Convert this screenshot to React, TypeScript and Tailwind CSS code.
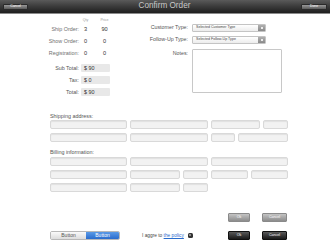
import React from "react";

const field =
  "h-[9px] rounded-[2px] border border-[#d9d9d9] bg-[#f2f2f2] shadow-[inset_0_1px_1px_#e0e0e0]";

function Row({ widths }: { widths: number[] }) {
  return (
    <div className="flex gap-[3px]">
      {widths.map((w, i) => (
        <div key={i} className={field} style={{ width: w }} />
      ))}
    </div>
  );
}

function QtyRow({ label, qty, price }: { label: string; qty: string; price: string }) {
  return (
    <div className="flex h-[12px] items-center">
      <div className="w-[79px] text-right text-[5.4px] text-[#707070]">{label}</div>
      <div className="w-[13px] text-center text-[5.6px] text-[#333]">{qty}</div>
      <div className="w-[25px] text-center text-[5.6px] text-[#333]">{price}</div>
    </div>
  );
}

function TotalRow({ label, value }: { label: string; value: string }) {
  return (
    <div className="flex h-[12px] items-center">
      <div className="w-[79px] text-right text-[5.4px] text-[#555]">{label}</div>
      <div className="ml-[2px] flex h-[8px] w-[29px] items-center rounded-[1px] bg-[#e8e8e8] pl-[3px] text-[5.4px] text-[#333]">
        {value}
      </div>
    </div>
  );
}

function Select({ text }: { text: string }) {
  return (
    <div className="flex h-[8px] w-[74px] items-center rounded-[1px] border border-[#c4c4c4] bg-gradient-to-b from-[#ffffff] to-[#ececec]">
      <div className="flex-1 pl-[3px] text-[3.6px] leading-none text-[#444]">{text}</div>
      <div className="flex h-full w-[7px] items-center justify-center bg-gradient-to-b from-[#b0b0b0] to-[#8a8a8a]">
        <div className="h-[2px] w-[2px] bg-white/80" />
      </div>
    </div>
  );
}

export default function App() {
  return (
    <div className="relative h-[248px] w-[330px] overflow-hidden bg-white font-['Liberation_Sans',Arial,sans-serif]">
      {/* Header */}
      <div className="flex h-[14px] items-center justify-between border-b border-[#8a8a8a] bg-gradient-to-b from-[#5a5a5a] via-[#3a3a3a] to-[#1f1f1f] px-[3px]">
        <div className="flex h-[6px] w-[25px] items-center justify-center rounded-[1px] border border-[#2a2a2a] bg-gradient-to-b from-[#9a9a9a] to-[#5a5a5a] text-[3.4px] leading-none text-white">
          Cancel
        </div>
        <div className="text-[8.2px] leading-none text-[#c8c8c8]">Confirm Order</div>
        <div className="flex h-[6px] w-[26px] items-center justify-center rounded-[1px] border border-[#2a2a2a] bg-gradient-to-b from-[#9a9a9a] to-[#5a5a5a] text-[3.4px] leading-none text-white">
          Done
        </div>
      </div>

      {/* Top section */}
      <div className="flex">
        <div className="w-[140px]">
          <div className="mt-[4px] flex h-[5px] items-center">
            <div className="w-[79px]" />
            <div className="w-[13px] text-center text-[3.6px] leading-none text-[#999]">Qty</div>
            <div className="w-[25px] text-center text-[3.6px] leading-none text-[#999]">Price</div>
          </div>
          <QtyRow label="Ship Order:" qty="3" price="90" />
          <QtyRow label="Show Order:" qty="0" price="0" />
          <QtyRow label="Registration:" qty="0" price="0" />
          <div className="mt-[3px]">
            <TotalRow label="Sub Total:" value="$ 90" />
            <TotalRow label="Tax:" value="$ 0" />
            <TotalRow label="Total:" value="$ 90" />
          </div>
        </div>
        <div className="flex-1 pt-[10px]">
          <div className="flex items-center">
            <div className="w-[48px] text-right text-[5.3px] text-[#555]">Customer Type:</div>
            <div className="ml-[4px]">
              <Select text="Selected Customer Type" />
            </div>
          </div>
          <div className="mt-[4px] flex items-center">
            <div className="w-[48px] text-right text-[5.3px] text-[#555]">Follow-Up Type:</div>
            <div className="ml-[4px]">
              <Select text="Selected Follow-Up Type" />
            </div>
          </div>
          <div className="mt-[5px] flex items-start">
            <div className="w-[48px] pt-[1px] text-right text-[5.3px] leading-[6px] text-[#555]">Notes:</div>
            <div className="ml-[4px] h-[44px] w-[90px] rounded-[1px] border border-[#c8c8c8] bg-white" />
          </div>
        </div>
      </div>

      {/* Addresses */}
      <div className="pl-[50px]">
        <div className="mt-[15px] h-[6px] text-[5.4px] leading-[6px] text-[#555]">Shipping address:</div>
        <div className="mt-[1px] flex flex-col gap-[4px]">
          <Row widths={[77, 78, 49, 25]} />
          <Row widths={[77, 78, 24, 50]} />
        </div>
        <div className="mt-[7px] h-[6px] text-[5.4px] leading-[6px] text-[#555]">Billing information:</div>
        <div className="mt-[2px] flex flex-col gap-[4px]">
          <Row widths={[77, 78, 77]} />
          <Row widths={[77, 50, 25, 37, 37]} />
          <Row widths={[77, 50, 25]} />
        </div>

        {/* Footer */}
        <div className="mt-[21px] flex w-[237px] items-end">
          <div className="flex h-[9px] overflow-hidden rounded-[2px] border border-[#b8b8b8]">
            <div className="flex w-[35px] items-center justify-center bg-gradient-to-b from-[#fafafa] to-[#dcdcdc] text-[5px] text-[#555]">
              Button
            </div>
            <div className="flex w-[33px] items-center justify-center bg-gradient-to-b from-[#5a9ae6] to-[#2a6ccd] text-[5px] text-white">
              Button
            </div>
          </div>
          <div className="mb-[1px] ml-[22px] flex items-center text-[4.8px] text-[#444]">
            <span>I aggre to&nbsp;</span>
            <span className="text-[#2a6ccd] underline">the policy</span>
            <span className="ml-[4px] flex h-[5px] w-[5px] items-center justify-center rounded-[1.5px] bg-[#333]">
              <span className="h-[2px] w-[2px] rounded-full bg-[#aaa]" />
            </span>
          </div>
          <div className="ml-auto flex flex-col gap-[9px]">
            <div className="flex gap-[12px]">
              <div className="flex h-[9px] w-[22px] items-center justify-center rounded-[1px] border border-[#8a8a8a] bg-gradient-to-b from-[#c4c4c4] to-[#8c8c8c] text-[3.6px] text-white">
                Ok
              </div>
              <div className="flex h-[9px] w-[25px] items-center justify-center rounded-[1px] border border-[#8a8a8a] bg-gradient-to-b from-[#c4c4c4] to-[#8c8c8c] text-[3.6px] text-white">
                Cancel
              </div>
            </div>
            <div className="flex gap-[12px]">
              <div className="flex h-[9px] w-[22px] items-center justify-center rounded-[1px] border border-[#111] bg-gradient-to-b from-[#5a5a5a] to-[#1a1a1a] text-[3.6px] text-white">
                Ok
              </div>
              <div className="flex h-[9px] w-[25px] items-center justify-center rounded-[1px] border border-[#111] bg-gradient-to-b from-[#5a5a5a] to-[#1a1a1a] text-[3.6px] text-white">
                Cancel
              </div>
            </div>
          </div>
        </div>
      </div>
    </div>
  );
}
